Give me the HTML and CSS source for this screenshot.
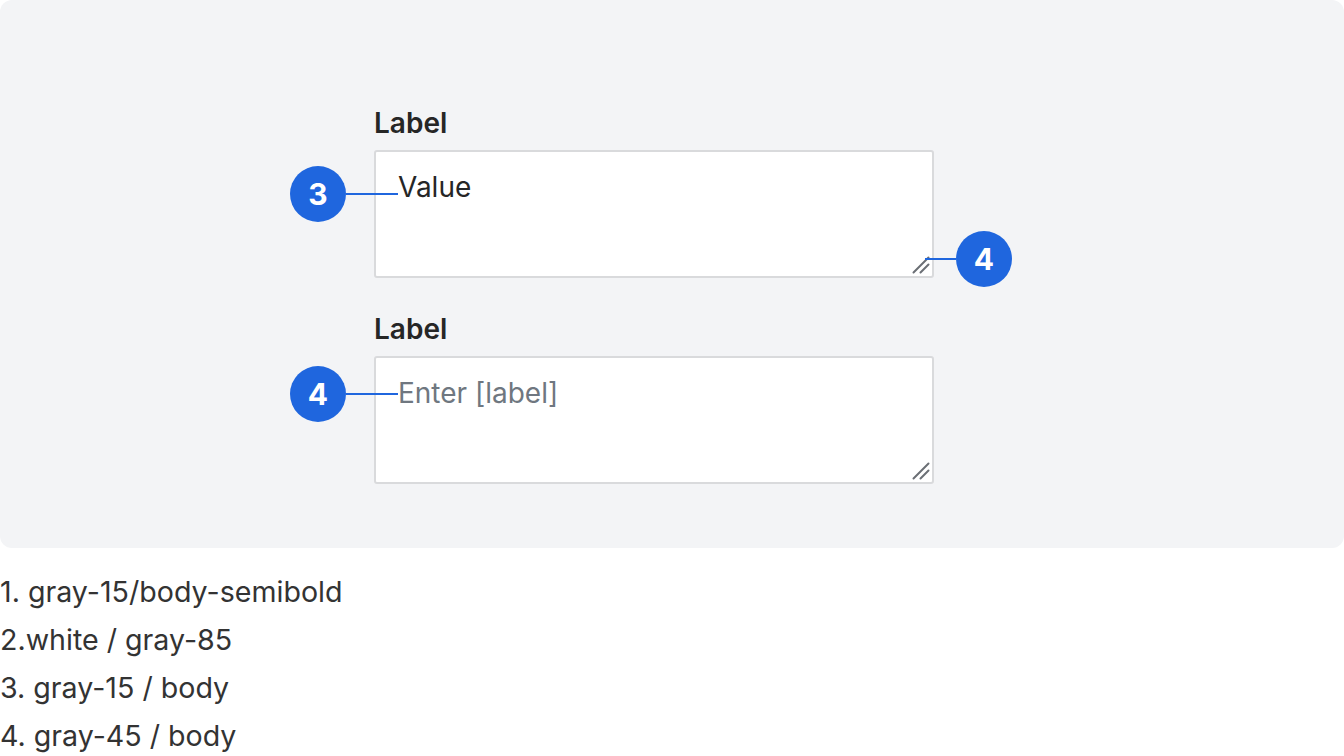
FILE: index.html
```html
<!DOCTYPE html>
<html lang="en">
<head>
<meta charset="utf-8">
<title>Textarea spec</title>
<link rel="stylesheet" href="styles.css">
</head>
<body>
  <section class="canvas">
    <div class="stack">
      <div class="field">
        <div class="label">Label</div>
        <div class="textarea">
          <span class="value">Value</span>
          <svg class="grip" width="18" height="18" viewBox="0 0 18 18"><path d="M16.5 1.5 L1.5 16.5 M16.5 8.5 L8.5 16.5" stroke="#6b6f75" stroke-width="2" stroke-linecap="round"/></svg>
        </div>
        <div class="marker marker-left"><span class="dot">3</span><span class="lead"></span></div>
        <div class="marker marker-right"><span class="lead"></span><span class="dot">4</span></div>
      </div>
      <div class="field">
        <div class="label">Label</div>
        <div class="textarea">
          <span class="placeholder">Enter [label]</span>
          <svg class="grip" width="18" height="18" viewBox="0 0 18 18"><path d="M16.5 1.5 L1.5 16.5 M16.5 8.5 L8.5 16.5" stroke="#6b6f75" stroke-width="2" stroke-linecap="round"/></svg>
        </div>
        <div class="marker marker-left marker-placeholder"><span class="dot">4</span><span class="lead"></span></div>
      </div>
    </div>
  </section>
  <ol class="legend">
    <li>1. gray-15/body-semibold</li>
    <li>2.white / gray-85</li>
    <li>3. gray-15 / body</li>
    <li>4. gray-45 / body</li>
  </ol>
</body>
</html>
```
FILE: styles.css
```css
* { box-sizing: border-box; }

body {
  margin: 0;
  background: #ffffff;
  font-family: Inter, "Noto Sans", sans-serif;
  color: #262626;
}

.canvas {
  height: 548px;
  background: #f3f4f6;
  border-radius: 12px;
  display: flex;
  padding: 107px 0 0 374px;
}

.stack {
  width: 560px;
  display: flex;
  flex-direction: column;
  gap: 35px;
}

.field {
  position: relative;
  display: flex;
  flex-direction: column;
  gap: 11px;
}

.label {
  font-size: 28px;
  line-height: 32px;
  font-weight: 600;
  color: #262626;
}

.textarea {
  position: relative;
  height: 128px;
  background: #ffffff;
  border: 2px solid #d9dadc;
  border-radius: 3px;
  padding: 19px 22px 15px;
  font-size: 28px;
  line-height: 32px;
}

.value { color: #262626; }
.placeholder { color: #6f7780; }

.grip {
  position: absolute;
  right: 2px;
  bottom: 2px;
}

/* numbered callouts with a leader line */
.marker {
  position: absolute;
  display: flex;
  align-items: center;
}

.marker-left {
  left: -84px;
  top: 59px;
}

.marker-left.marker-placeholder {
  top: 53px;
}

.marker-right {
  left: 551px;
  top: 124px;
}

.dot {
  width: 56px;
  height: 56px;
  border-radius: 50%;
  background: #1f66de;
  color: #ffffff;
  font-size: 30px;
  font-weight: 700;
  display: flex;
  align-items: center;
  justify-content: center;
}

.lead {
  height: 2px;
  background: #1f66de;
}

.marker-left .lead { width: 52px; }
.marker-right .lead { width: 31px; }

.legend {
  list-style: none;
  margin: 20px 0 0;
  padding: 0;
  font-size: 28.6px;
  line-height: 48px;
  color: #333333;
}
```
